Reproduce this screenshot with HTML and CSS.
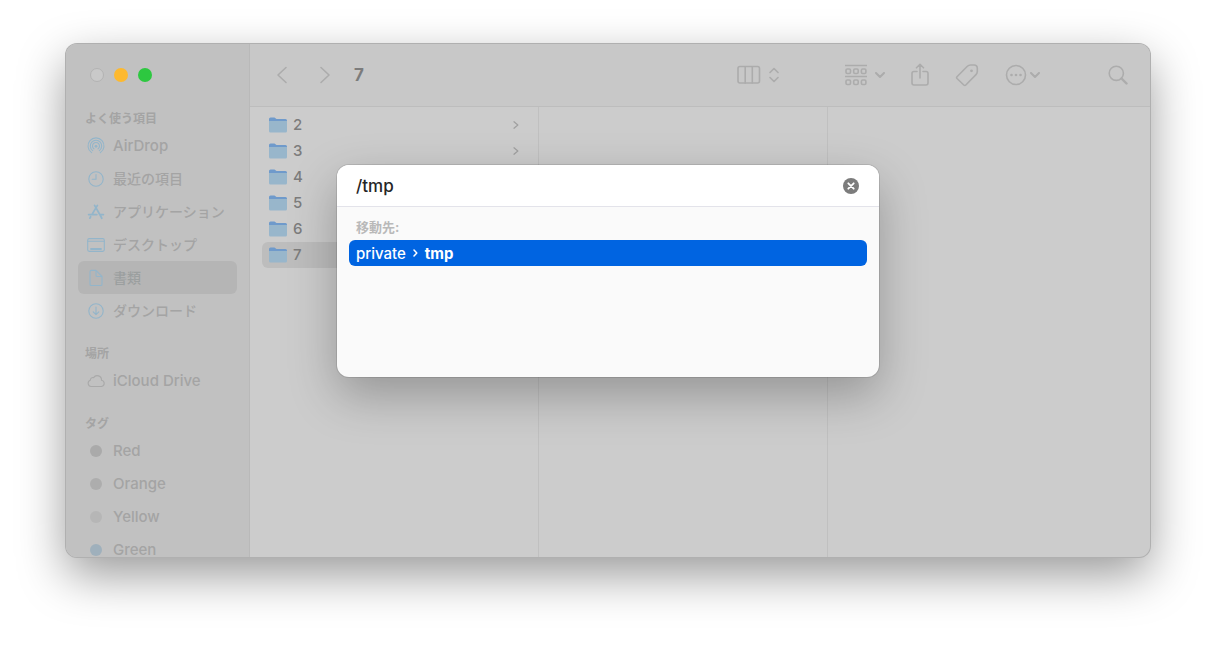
FILE: index.html
```html
<!DOCTYPE html>
<html lang="ja">
<head>
  <meta charset="UTF-8">
  <title>7</title>
  <link rel="stylesheet" href="styles.css">
</head>
<body>
  <div class="window">
    <aside class="sidebar">
      <div class="lights">
        <button class="light close" aria-label="閉じる"></button>
        <button class="light minimize" aria-label="しまう"></button>
        <button class="light maximize" aria-label="拡大"></button>
      </div>
      <nav class="places">
        <section>
          <h2>よく使う項目</h2>
          <a href="#" class="place">
            <svg class="icon" viewBox="0 0 18 18"><path d="M4.600 15.600a8 8 0 1 1 8.800 0M5.700 13.600a5.700 5.700 0 1 1 6.600 0M6.900 11.800a3.500 3.500 0 1 1 4.200 0"/><circle class="dot" cx="9" cy="9.300" r="1.400"/></svg>
            AirDrop
          </a>
          <a href="#" class="place ja">
            <svg class="icon" viewBox="0 0 18 18"><circle cx="9" cy="9" r="7.2"/><path d="M9 4.5V9.3H5.2"/></svg>
            最近の項目
          </a>
          <a href="#" class="place ja">
            <svg class="icon thick" viewBox="0 0 18 18"><path d="M7.6 2.4l5.9 10.4 1.3 2.4M10.4 2.4L4.9 11.6M3.6 13.8l-.7 1.3M1.6 11.6h8.2M13 11.6h3.4"/></svg>
            アプリケーション
          </a>
          <a href="#" class="place ja">
            <svg class="icon" viewBox="0 0 18 18"><rect x=".7" y="2.6" width="16.6" height="12.8" rx="1.6"/><path d="M1 5.2h16"/><path class="thick" d="M4 13h10"/></svg>
            デスクトップ
          </a>
          <a href="#" class="place ja selected">
            <svg class="icon" viewBox="0 0 18 18"><path d="M4.300 1.400H9L15 7.400v7.800a1.300 1.300 0 0 1-1.300 1.300H4.300A1.300 1.300 0 0 1 3 15.200V2.700A1.300 1.300 0 0 1 4.300 1.400zM9 1.600v4.700a1.200 1.200 0 0 0 1.200 1.200h4.600"/></svg>
            書類
          </a>
          <a href="#" class="place ja">
            <svg class="icon" viewBox="0 0 18 18"><circle cx="9" cy="9" r="7.2"/><path d="M9 5v7.600M6.200 9.900L9 12.700l2.800-2.800"/></svg>
            ダウンロード
          </a>
        </section>
        <section>
          <h2>場所</h2>
          <a href="#" class="place">
            <svg class="icon gray" viewBox="0 0 18 18"><path d="M4 14.500a3.200 3.200 0 0 1-.7-6.200 2.600 2.600 0 0 1 3.300-2.700 4.300 4.300 0 0 1 7.900 2.600 3.200 3.200 0 0 1 .1 6.300z"/></svg>
            iCloud Drive
          </a>
        </section>
        <section>
          <h2>タグ</h2>
          <a href="#" class="place"><span class="tag red"></span>Red</a>
          <a href="#" class="place"><span class="tag orange"></span>Orange</a>
          <a href="#" class="place"><span class="tag yellow"></span>Yellow</a>
          <a href="#" class="place"><span class="tag green"></span>Green</a>
        </section>
      </nav>
    </aside>

    <main class="main">
      <header class="toolbar">
        <div class="history">
          <button aria-label="戻る"><svg width="12" height="18" viewBox="0 0 12 18"><path d="M10 1.500L2 9l8 7.500"/></svg></button>
          <button aria-label="進む"><svg width="12" height="18" viewBox="0 0 12 18"><path d="M2 1.500L10 9l-8 7.500"/></svg></button>
        </div>
        <h1>7</h1>
        <div class="tools">
          <button class="view" aria-label="表示">
            <svg width="24" height="20" viewBox="0 0 24 20"><rect x="1" y="1.500" width="21.500" height="16.500" rx="2"/><path d="M8.200 2v16M15.300 2v16"/></svg>
            <svg width="10" height="18" viewBox="0 0 10 18"><path d="M1 6.500l4-4 4 4M1 11.500l4 4 4-4"/></svg>
          </button>
          <button class="group" aria-label="グループ分け">
            <svg width="22" height="22" viewBox="0 0 22 22"><path d="M.5 1.500h21M.5 12.500h21"/><rect x="1" y="5" width="4.500" height="4.500" rx="1.200"/><rect x="8.700" y="5" width="4.500" height="4.500" rx="1.200"/><rect x="16.400" y="5" width="4.500" height="4.500" rx="1.200"/><rect x="1" y="16" width="4.500" height="4.500" rx="1.200"/><rect x="8.700" y="16" width="4.500" height="4.500" rx="1.200"/><rect x="16.400" y="16" width="4.500" height="4.500" rx="1.200"/></svg>
            <svg class="down" width="10" height="6" viewBox="0 0 10 6"><path d="M1 1l4 4 4-4"/></svg>
          </button>
          <button aria-label="共有">
            <svg width="18" height="24" viewBox="0 0 18 24"><path d="M6 8.500H3A2 2 0 0 0 1 10.500v9.500a2 2 0 0 0 2 2h12a2 2 0 0 0 2-2v-9.500a2 2 0 0 0-2-2h-3M9 15V1.500M5.500 4.800L9 1.300l3.500 3.500"/></svg>
          </button>
          <button aria-label="タグを編集">
            <svg width="24" height="24" viewBox="0 0 24 24"><path d="M2 13.800L12.400 3.300Q13.700 2 15.500 2H19Q22.300 2 22.300 5.300V8.500Q22.300 10.300 21 11.600L10.800 22q-1 1-2 0L2 15.500q-.8-.9 0-1.700z"/><circle class="dot" cx="16.500" cy="7.800" r="1.400"/></svg>
          </button>
          <button class="more" aria-label="アクション">
            <svg width="22" height="22" viewBox="0 0 22 22"><circle cx="11" cy="11" r="9.500"/><circle class="dot" cx="6.500" cy="11" r="1.300"/><circle class="dot" cx="11" cy="11" r="1.300"/><circle class="dot" cx="15.500" cy="11" r="1.300"/></svg>
            <svg class="down" width="10" height="6" viewBox="0 0 10 6"><path d="M1 1l4 4 4-4"/></svg>
          </button>
          <button class="search" aria-label="検索">
            <svg width="20" height="20" viewBox="0 0 20 20"><circle cx="8.300" cy="8.300" r="7.100"/><path class="handle" d="M13.500 13.500l5 5"/></svg>
          </button>
        </div>
      </header>

      <div class="columns">
        <ul class="column files">
          <li><svg class="folder" viewBox="0 0 18 16"><path class="back" d="M0 2Q0 .5 1.500.5h4L7.500 2H16.500Q18 2 18 3.500V8H0z"/><path class="front" d="M0 4h18v10q0 1.500-1.500 1.500h-15Q0 15.500 0 14z"/></svg>2<svg class="arrow" viewBox="0 0 6 8"><path d="M1 .8L4.800 4 1 7.200"/></svg></li>
          <li><svg class="folder" viewBox="0 0 18 16"><path class="back" d="M0 2Q0 .5 1.500.5h4L7.500 2H16.500Q18 2 18 3.500V8H0z"/><path class="front" d="M0 4h18v10q0 1.500-1.500 1.500h-15Q0 15.500 0 14z"/></svg>3<svg class="arrow" viewBox="0 0 6 8"><path d="M1 .8L4.800 4 1 7.200"/></svg></li>
          <li><svg class="folder" viewBox="0 0 18 16"><path class="back" d="M0 2Q0 .5 1.500.5h4L7.500 2H16.500Q18 2 18 3.500V8H0z"/><path class="front" d="M0 4h18v10q0 1.500-1.500 1.500h-15Q0 15.500 0 14z"/></svg>4</li>
          <li><svg class="folder" viewBox="0 0 18 16"><path class="back" d="M0 2Q0 .5 1.500.5h4L7.500 2H16.500Q18 2 18 3.500V8H0z"/><path class="front" d="M0 4h18v10q0 1.500-1.500 1.500h-15Q0 15.500 0 14z"/></svg>5</li>
          <li><svg class="folder" viewBox="0 0 18 16"><path class="back" d="M0 2Q0 .5 1.500.5h4L7.500 2H16.500Q18 2 18 3.500V8H0z"/><path class="front" d="M0 4h18v10q0 1.500-1.500 1.500h-15Q0 15.500 0 14z"/></svg>6</li>
          <li class="selected"><svg class="folder" viewBox="0 0 18 16"><path class="back" d="M0 2Q0 .5 1.500.5h4L7.500 2H16.500Q18 2 18 3.500V8H0z"/><path class="front" d="M0 4h18v10q0 1.500-1.500 1.500h-15Q0 15.500 0 14z"/></svg>7</li>
        </ul>
        <div class="column"></div>
        <div class="column last"></div>
      </div>
    </main>

    <form class="goto" role="dialog" aria-label="フォルダへ移動">
      <div class="field">
        <input type="text" value="/tmp" aria-label="フォルダへ移動" spellcheck="false">
        <button type="button" class="clear" aria-label="消去"><svg width="16" height="16" viewBox="0 0 16 16"><circle cx="8" cy="8" r="8"/><path d="M5.300 5.300l5.400 5.400M10.700 5.300l-5.400 5.400"/></svg></button>
      </div>
      <div class="results">
        <h2>移動先:</h2>
        <button type="button" class="result">
          private
          <svg width="5" height="8" viewBox="0 0 5 8"><path d="M1 1l2.800 3L1 7"/></svg>
          <b>tmp</b>
        </button>
      </div>
    </form>
  </div>
</body>
</html>
```
FILE: styles.css
```css
* {
  box-sizing: border-box;
}

body {
  margin: 0;
  height: 100vh;
  padding: 44px 66px 88px;
  display: flex;
  background: #fff;
  font-family: Inter, "Noto Sans CJK JP", sans-serif;
  font-size: 15px;
}

h1, h2, ul {
  margin: 0;
  padding: 0;
}

button {
  padding: 0;
  border: none;
  background: none;
  font: inherit;
  color: inherit;
}

svg {
  display: block;
  flex: none;
  fill: none;
  stroke: currentColor;
  stroke-linecap: round;
  stroke-linejoin: round;
}

.dot {
  fill: currentColor;
  stroke: none;
}

/* window */
.window {
  position: relative;
  flex: 1;
  display: flex;
  border-radius: 11px;
  background: #ccc;
  box-shadow: 0 0 0 1px #b0b0b0, 0 18px 48px rgba(0, 0, 0, 0.4);
}

/* sidebar */
.sidebar {
  width: 184px;
  display: flex;
  flex-direction: column;
  background: #c1c1c1;
  border-right: 1px solid #b9b9b9;
  border-radius: 11px 0 0 11px;
  overflow: hidden;
}

.lights {
  flex: none;
  height: 62px;
  padding-left: 24px;
  display: flex;
  align-items: center;
  gap: 10px;
}

.light {
  width: 14px;
  height: 14px;
  border-radius: 50%;
}

.close {
  background: #c9c9c9;
  border: 1px solid #b3b3b3;
}

.minimize {
  background: #fdb92f;
}

.maximize {
  background: #2dc840;
}

.places {
  flex: 1;
  min-height: 0;
  display: flex;
  flex-direction: column;
  gap: 14px;
  padding: 0 12px;
  color: #a4a4a4;
}

.places h2 {
  height: 23px;
  padding-left: 7px;
  font-size: 12px;
  line-height: 25px;
  font-weight: 700;
}

.place {
  height: 33px;
  padding-left: 9px;
  display: flex;
  align-items: center;
  gap: 8px;
  border-radius: 6px;
  color: #a4a4a4;
  font-size: 15px;
  font-weight: 500;
  line-height: 20px;
  text-decoration: none;
}

.place.ja {
  font-size: 14px;
}

.place.selected {
  background: #b5b5b5;
  color: #9b9f9f;
}

.icon {
  width: 18px;
  height: 18px;
  color: #93b5ca;
  stroke-width: 1.1;
}

.icon.gray {
  color: #a9a9a9;
}

.icon.thick,
.icon .thick {
  stroke-width: 1.8;
}

.tag {
  width: 12px;
  height: 12px;
  margin: 0 3px;
  border-radius: 50%;
}

.red { background: #aaa; }
.orange { background: #adadad; }
.yellow { background: #b6b6b6; }
.green { background: #9fb0bc; }

/* toolbar */
.main {
  flex: 1;
  display: flex;
  flex-direction: column;
}

.toolbar {
  height: 63px;
  padding: 0 22px 0 26px;
  display: flex;
  align-items: center;
  background: #c8c8c8;
  border-bottom: 1px solid #bdbdbd;
  border-radius: 0 11px 0 0;
  color: #acacac;
}

.toolbar svg {
  stroke-width: 1.6;
}

.toolbar .down {
  stroke-width: 2;
}

.toolbar .handle {
  stroke-width: 2.4;
}

.history {
  display: flex;
  gap: 31px;
}

.toolbar h1 {
  margin-left: 23px;
  font-size: 17px;
  line-height: 24px;
  color: #7c7c7c;
}

.tools {
  margin-left: auto;
  display: flex;
  align-items: center;
  gap: 26px;
}

.tools button {
  display: flex;
  align-items: center;
  gap: 8px;
}

.tools .view {
  margin-right: 40px;
}

.tools .more {
  gap: 3px;
}

.tools .search {
  margin-left: 42px;
}

/* columns */
.columns {
  flex: 1;
  display: flex;
}

.column {
  width: 289px;
  border-right: 1px solid #c0c0c0;
}

.column.last {
  flex: 1;
  border: none;
}

.files {
  padding: 5px 12px;
  list-style: none;
}

.files li {
  height: 26px;
  padding: 0 7px;
  display: flex;
  align-items: center;
  gap: 6px;
  border-radius: 6px;
  color: #7c7c7c;
  font-weight: 500;
  line-height: 20px;
}

.files .selected {
  background: #bdbdbd;
}

.folder {
  width: 18px;
  height: 16px;
  stroke: none;
}

.folder .back { fill: #6f9acb; }
.folder .front { fill: #98b6cb; }

.arrow {
  width: 6px;
  height: 8px;
  margin-left: auto;
  stroke: #a0a0a0;
  stroke-width: 1.3;
}

/* go to folder panel */
.goto {
  position: absolute;
  top: 121px;
  left: 50%;
  width: 542px;
  height: 212px;
  transform: translateX(-50%);
  border-radius: 12px;
  background: #fafafa;
  box-shadow: 0 0 0 1px rgba(0, 0, 0, 0.1), 0 18px 48px rgba(0, 0, 0, 0.27);
  overflow: hidden;
}

.field {
  height: 42px;
  padding: 0 20px 0 19px;
  display: flex;
  align-items: center;
  background: #fff;
  border-bottom: 1px solid #e3e3ea;
}

.field input {
  flex: 1;
  padding: 0;
  border: none;
  outline: none;
  background: none;
  font: inherit;
  font-size: 17px;
  font-weight: 500;
  color: #262626;
}

.clear svg {
  fill: #7c7c7c;
  stroke: none;
}

.clear path {
  stroke: #fff;
  stroke-width: 1.8;
}

.results {
  padding: 10px 12px;
}

.results h2 {
  height: 23px;
  padding-left: 7px;
  font-size: 13px;
  line-height: 20px;
  font-weight: 700;
  color: #b9b9b9;
}

.result {
  width: 100%;
  height: 26px;
  padding: 0 7px;
  display: flex;
  align-items: center;
  gap: 7px;
  border-radius: 6px;
  background: #0064e1;
  color: #fff;
  font-weight: 500;
}

.result svg {
  stroke-width: 1.5;
}
```
